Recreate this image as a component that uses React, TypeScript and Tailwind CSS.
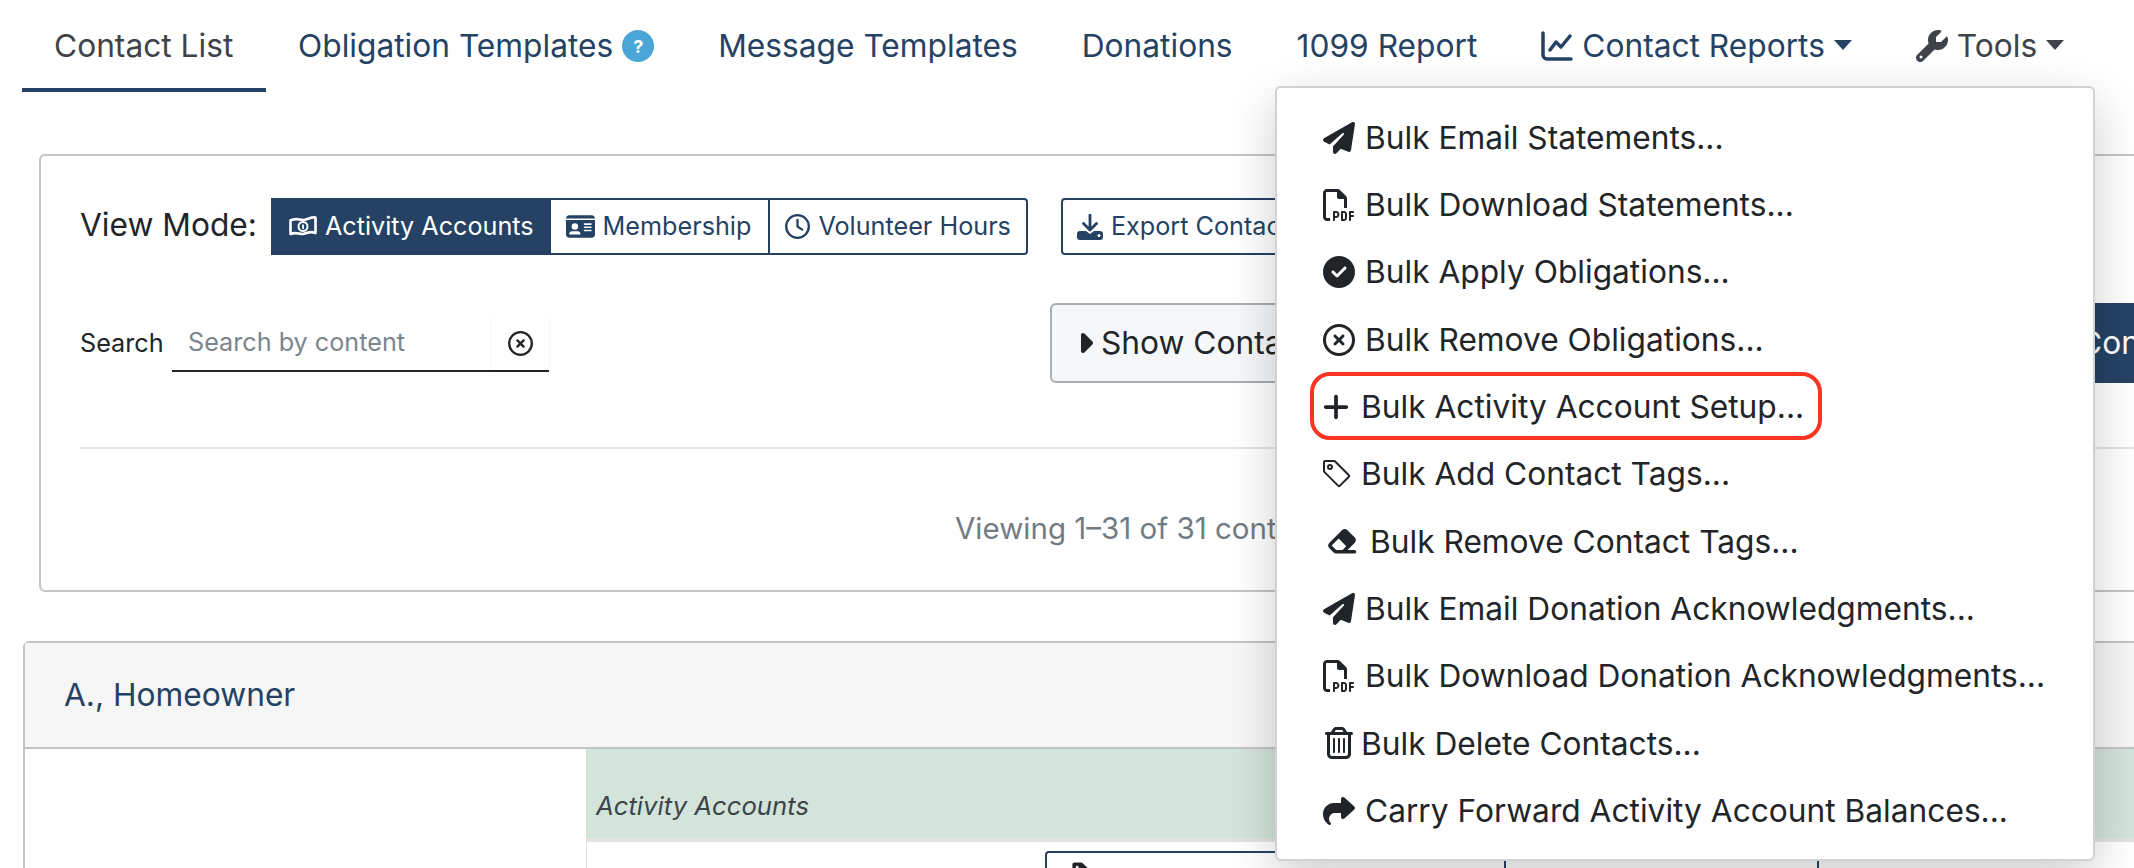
import {
  FaCaretRight,
  FaCircleCheck,
  FaEraser,
  FaIdCard,
  FaPaperPlane,
  FaPlus,
  FaRegCircleXmark,
  FaRegClock,
  FaRegFilePdf,
  FaRegTrashCan,
  FaShare,
  FaTag,
  FaWrench,
} from 'react-icons/fa6';
import { BsTag } from 'react-icons/bs';
import type { ReactNode } from 'react';

function ChartIcon() {
  return (
    <svg width="32" height="32" viewBox="0 0 32 32" fill="none" stroke="currentColor" strokeWidth="3.500" strokeLinecap="round" strokeLinejoin="round">
      <path d="M2 3v22a4 4 0 0 0 4 4h24" />
      <path d="M9 20l6-8 5 5 9-11" />
    </svg>
  );
}

function BillIcon() {
  return (
    <svg width="28" height="24" viewBox="0 0 28 24" fill="none" stroke="currentColor" strokeWidth="2.600" strokeLinejoin="round">
      <path d="M1.500 5.500C7 2.500 10 5 14 5s8-3.500 12.500-2.500v15.500C21 15.500 18 18.500 14 19s-7-2.500-12.500 0z" />
      <circle cx="14" cy="11.500" r="4.500" strokeWidth="2" />
      <path d="M14 9.500v4.500" strokeWidth="1.800" />
    </svg>
  );
}

function ExportIcon() {
  return (
    <svg width="26" height="26" viewBox="0 0 26 26">
      <path d="M13 1v14M6.500 9.500l6.500 6.500 6.500-6.500" fill="none" stroke="currentColor" strokeWidth="2.800" strokeLinecap="round" strokeLinejoin="round" />
      <path d="M3 17h6l4 3 4-3h6a3 3 0 0 1 3 3v3a3 3 0 0 1-3 3H3a3 3 0 0 1-3-3v-3a3 3 0 0 1 3-3z" fill="currentColor" />
      <circle cx="22" cy="21.500" r="1.500" fill="#fff" />
    </svg>
  );
}

interface MenuItem {
  icon: ReactNode;
  label: string;
}

const menuItems: MenuItem[] = [
  { icon: <FaPaperPlane size={32} />, label: 'Bulk Email Statements...' },
  { icon: <FaRegFilePdf size={32} />, label: 'Bulk Download Statements...' },
  { icon: <FaCircleCheck size={32} />, label: 'Bulk Apply Obligations...' },
  { icon: <FaRegCircleXmark size={32} />, label: 'Bulk Remove Obligations...' },
  { icon: <FaPlus size={30} className="-ml-[2px]" />, label: 'Bulk Activity Account Setup...' },
  { icon: <BsTag size={32} className="-mx-[2px]" />, label: 'Bulk Add Contact Tags...' },
  { icon: <FaEraser size={32} className="ml-[3px] mr-[2px]" />, label: 'Bulk Remove Contact Tags...' },
  { icon: <FaPaperPlane size={32} />, label: 'Bulk Email Donation Acknowledgments...' },
  { icon: <FaRegFilePdf size={32} />, label: 'Bulk Download Donation Acknowledgments...' },
  { icon: <FaRegTrashCan size={32} className="-mr-[4px]" />, label: 'Bulk Delete Contacts...' },
  { icon: <FaShare size={32} />, label: 'Carry Forward Activity Account Balances...' },
];

function Tab({ children, active }: { children: ReactNode; active?: boolean }) {
  return (
    <div
      className={
        active
          ? 'flex h-[92px] w-[244px] items-center gap-[9px] border-b-[4px] border-[#254264] px-8 pt-[4px] text-[#3d4349]'
          : 'flex h-[92px] items-center gap-[9px] px-8 text-[#254264]'
      }
    >
      {children}
    </div>
  );
}

function Caret() {
  return <span className="mb-[2px] h-0 w-0 border-x-[9px] border-t-[10px] border-x-transparent border-t-current" />;
}

function App() {
  return (
    <div className="relative h-[868px] w-[2134px] overflow-hidden bg-white font-['Inter',sans-serif] text-[31.700px] text-[#212529]">
      <nav className="flex pl-[22px] whitespace-nowrap">
        <Tab active>Contact List</Tab>
        <Tab>
          Obligation Templates
          <span className="flex h-8 w-8 items-center justify-center rounded-full bg-[#4ba6d8] text-[18px] font-bold text-white">?</span>
        </Tab>
        <Tab>Message Templates</Tab>
        <Tab>Donations</Tab>
        <Tab>1099 Report</Tab>
        <Tab>
          <ChartIcon />
          Contact Reports
          <Caret />
        </Tab>
        <Tab>
          <div className="flex items-center gap-[9px] text-[#3d4349]">
            <FaWrench size={32} />
            Tools
            <Caret />
          </div>
        </Tab>
      </nav>

      <section className="ml-[39px] mt-[62px] h-[438px] w-[2200px] rounded-md border-2 border-[#c4c4c4] pl-[39px] pr-10">
        <div className="flex items-center pt-[42px]">
          <span className="mb-1 mr-[14px]">View Mode:</span>
          <div className="flex h-[57px] text-[25.200px] text-[#254264]">
            <div className="flex items-center gap-2 bg-[#254264] pl-[18px] pr-[17px] text-white">
              <BillIcon />
              Activity Accounts
            </div>
            <div className="flex items-center gap-2 border-y-2 border-r-2 border-[#254264] pl-[15px] pr-[17px]">
              <FaIdCard size={29} />
              Membership
            </div>
            <div className="flex items-center gap-2 rounded-r border-y-2 border-r-2 border-[#254264] px-[15px]">
              <FaRegClock size={25} />
              Volunteer Hours
            </div>
            <div className="ml-[33px] flex items-center gap-2 rounded border-2 border-[#254264] pl-[14px] pr-4">
              <ExportIcon />
              Export Contacts
            </div>
          </div>
        </div>

        <div className="mt-[48px] flex items-center">
          <span className="mt-[2px] w-[92px] shrink-0 text-[25.200px]">Search</span>
          <div className="mt-[2px] flex h-[56px] w-[377px] shrink-0 items-center justify-between border-b-2 border-[#212529] pl-4 text-[25.200px]">
            <span className="text-[#7b858e]">Search by content</span>
            <div className="flex h-full w-[57px] items-center justify-center shadow-[0_1px_3px_rgba(0,0,0,0.07)]">
              <FaRegCircleXmark size={25} />
            </div>
          </div>
          <div className="ml-[501px] flex h-[80px] w-[500px] shrink-0 items-center rounded-md border-2 border-[#a8adb3] bg-[#f6f7f8] pl-[17px]">
            <FaCaretRight size={32} />
            Show Contact Filters
          </div>
          <div className="ml-[500px] flex h-[80px] w-[140px] shrink-0 items-center rounded bg-[#254264] pl-[29px] text-white">
            Contact
          </div>
        </div>

        <hr className="mt-[64px] border-t-2 border-[#e4e4e4]" />

        <p className="mt-[57px] pl-[875px] text-[29.500px] text-[#727b84]">Viewing 1–31 of 31 contacts</p>
      </section>

      <section className="ml-[23px] mt-[49px] w-[2200px] rounded-t-md border-2 border-b-0 border-[#c4c4c4]">
        <div className="flex h-[106px] items-center border-b-[2px] border-[#c4c4c4] bg-[#f6f6f6] pl-[39px] text-[#254264]">
          A., Homeowner
        </div>
        <div className="ml-[561px] flex h-[89px] items-end bg-[#d3e4da] pb-[12px] pl-[10px] text-[25.700px] italic text-[#3e444a]">
          Activity Accounts
        </div>
        <div className="ml-[561px] h-[40px] border-l border-t-[4px] border-[#e3e3e3] pl-[458px] pt-[9px]">
          <div className="flex h-[40px] w-[774px] rounded-t border-x-2 border-t-2 border-[#254264]">
            <div className="w-[459px] border-r-2 border-[#254264] pl-[24px] pt-[8px] text-[#212529]">
              <FaTag size={22} />
            </div>
          </div>
        </div>
      </section>

      {/* tools dropdown, open over the page */}
      <div className="absolute left-[1275px] top-[86px] h-[775px] w-[820px] rounded-md border-2 border-[#d2d2d2] bg-white pl-[46px] pt-[16px] shadow-[0_16px_48px_rgba(0,0,0,0.2)]">
        {menuItems.map((item) => (
          <div key={item.label} className="flex h-[67.300px] items-center gap-[10px]">
            {item.icon}
            <span className="whitespace-nowrap">{item.label}</span>
          </div>
        ))}
      </div>

      {/* annotation drawn on the screenshot */}
      <div className="absolute left-[1310px] top-[372px] h-[68px] w-[512px] rounded-[20px] border-[4px] border-[#fb3524]" />
    </div>
  );
}

export default App;
